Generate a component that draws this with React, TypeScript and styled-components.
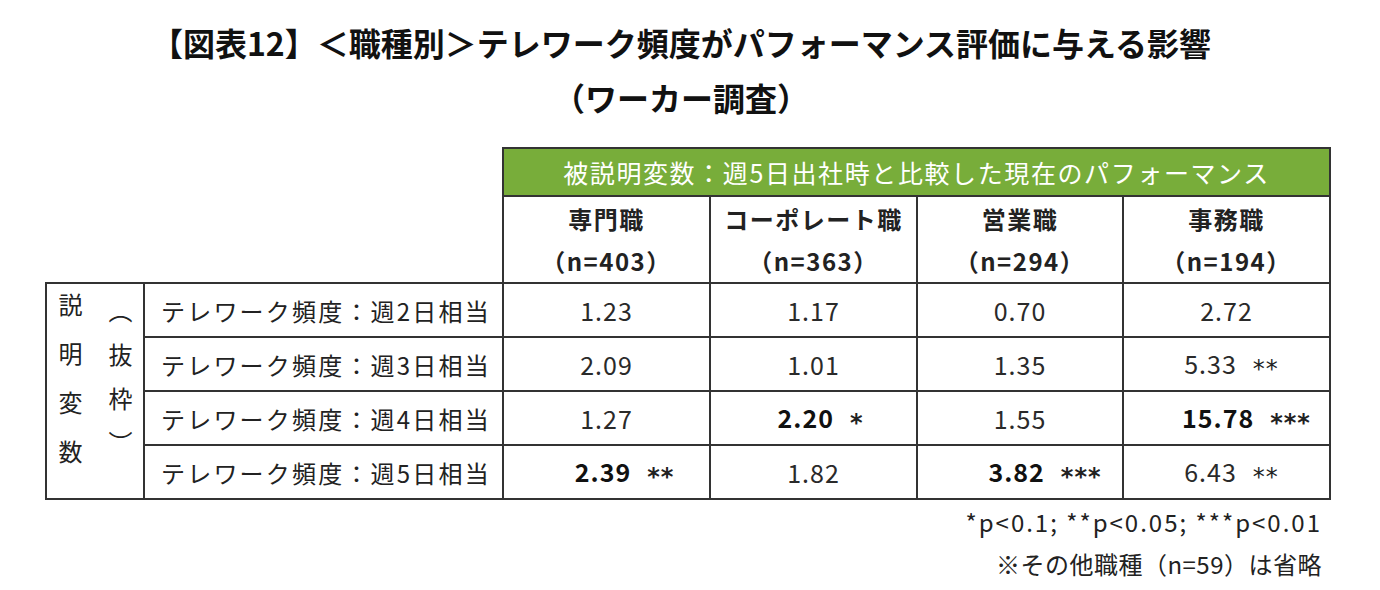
import React from 'react';
import styled, { createGlobalStyle } from 'styled-components';

const Global = createGlobalStyle`
  html, body { margin: 0; padding: 0; background: #fff; }
  body { font-family: "Noto Sans CJK JP", "Noto Sans", sans-serif; color: #222; }
`;

const Page = styled.div`
  width: 1380px;
  height: 590px;
  overflow: hidden;
`;

const Title = styled.h1`
  margin: 0;
  padding: 15px 18px 0 0;
  font-size: 32px;
  line-height: 55px;
  font-weight: 700;
  text-align: center;
  color: #111;
`;

const Table = styled.table`
  margin: 22px 0 0 45px;
  border-collapse: collapse;
  table-layout: fixed;
  width: 1284px;
  font-size: 24px;
`;

const Blank = styled.td`
  border: none;
  padding: 0;
`;

const GreenCell = styled.td`
  height: 46px;
  padding: 0;
  background: #78ad3a;
  color: #fff;
  text-align: center;
  border: 2px solid #333;
  font-size: 25px;
  letter-spacing: 1.6px;
  line-height: 1;
`;

const HeadCell = styled.td`
  height: 85px;
  padding: 0;
  border: 2px solid #333;
  text-align: center;
  font-weight: 700;
  letter-spacing: 1.5px;
  line-height: 42px;
  color: #222;
`;

const GroupCell = styled.td`
  border: 2px solid #333;
  padding: 0;
  vertical-align: middle;
`;

const GroupInner = styled.div`
  display: flex;
  justify-content: center;
  gap: 26px;
`;

const VertText = styled.span`
  writing-mode: vertical-rl;
  letter-spacing: 25px;
  font-size: 24px;
  line-height: 1;
  color: #222;
`;

const VertParen = styled(VertText)`
  letter-spacing: 20px;
  margin-top: 6px;
`;

const LabelCell = styled.td`
  height: 52px;
  padding: 0 0 0 16px;
  border: 2px solid #333;
  white-space: nowrap;
  letter-spacing: 2.2px;
  color: #222;
`;

const ValueCell = styled.td<{ $shift: number }>`
  padding: 0 0 0 ${(p) => p.$shift}px;
  border: 2px solid #333;
  text-align: center;
  white-space: nowrap;
  font-size: 25px;
  letter-spacing: 1px;
`;

const Num = styled.span<{ $bold: boolean }>`
  font-weight: ${(p) => (p.$bold ? 700 : 400)};
  color: ${(p) => (p.$bold ? '#111' : '#2a2a2a')};
`;

const Stars = styled.span<{ $bold: boolean }>`
  margin-left: 16px;
  font-family: "DejaVu Sans", sans-serif;
  font-size: 24px;
  letter-spacing: 1px;
  vertical-align: -3px;
  font-weight: ${(p) => (p.$bold ? 700 : 400)};
`;

const Notes = styled.div`
  width: 1322px;
  text-align: right;
  padding-top: 1px;
  font-size: 24px;
  line-height: 42px;
  color: #222;
`;

const NoteLine = styled.div<{ $spacing: number }>`
  letter-spacing: ${(p) => p.$spacing}px;
`;

type Val = { n: string; s?: string; b?: boolean; shift?: number };

const cols = [
  { name: '専門職', n: '（n=403）' },
  { name: 'コーポレート職', n: '（n=363）' },
  { name: '営業職', n: '（n=294）' },
  { name: '事務職', n: '（n=194）' },
];

const rows: { label: string; vals: Val[] }[] = [
  { label: 'テレワーク頻度：週2日相当', vals: [{ n: '1.23' }, { n: '1.17' }, { n: '0.70' }, { n: '2.72' }] },
  { label: 'テレワーク頻度：週3日相当', vals: [{ n: '2.09' }, { n: '1.01' }, { n: '1.35' }, { n: '5.33', s: '**', shift: 10 }] },
  { label: 'テレワーク頻度：週4日相当', vals: [{ n: '1.27' }, { n: '2.20', s: '*', b: true, shift: 14 }, { n: '1.55' }, { n: '15.78', s: '***', b: true, shift: 40 }] },
  { label: 'テレワーク頻度：週5日相当', vals: [{ n: '2.39', s: '**', b: true, shift: 36 }, { n: '1.82' }, { n: '3.82', s: '***', b: true, shift: 50 }, { n: '6.43', s: '**', shift: 10 }] },
];

export default function App() {
  return (
    <Page>
      <Global />
      <Title>
        【図表12】＜職種別＞テレワーク頻度がパフォーマンス評価に与える影響
        <br />
        （ワーカー調査）
      </Title>
      <Table>
        <colgroup>
          <col style={{ width: 98 }} />
          <col style={{ width: 359 }} />
          <col style={{ width: 207 }} />
          <col style={{ width: 207 }} />
          <col style={{ width: 206 }} />
          <col style={{ width: 207 }} />
        </colgroup>
        <tbody>
          <tr>
            <Blank colSpan={2} rowSpan={2} />
            <GreenCell colSpan={4}>被説明変数：週5日出社時と比較した現在のパフォーマンス</GreenCell>
          </tr>
          <tr>
            {cols.map((c) => (
              <HeadCell key={c.name}>
                {c.name}
                <br />
                {c.n}
              </HeadCell>
            ))}
          </tr>
          {rows.map((r, i) => (
            <tr key={r.label}>
              {i === 0 && (
                <GroupCell rowSpan={4}>
                  <GroupInner>
                    <VertText>説明変数</VertText>
                    <VertParen>（抜枠）</VertParen>
                  </GroupInner>
                </GroupCell>
              )}
              <LabelCell>{r.label}</LabelCell>
              {r.vals.map((v, j) => (
                <ValueCell key={j} $shift={v.shift ?? 0}>
                  <Num $bold={!!v.b}>{v.n}</Num>
                  {v.s && <Stars $bold={!!v.b}>{v.s}</Stars>}
                </ValueCell>
              ))}
            </tr>
          ))}
        </tbody>
      </Table>
      <Notes>
        <NoteLine $spacing={2}>*p&lt;0.1; **p&lt;0.05; ***p&lt;0.01</NoteLine>
        <NoteLine $spacing={0.5}>※その他職種（n=59）は省略</NoteLine>
      </Notes>
    </Page>
  );
}
